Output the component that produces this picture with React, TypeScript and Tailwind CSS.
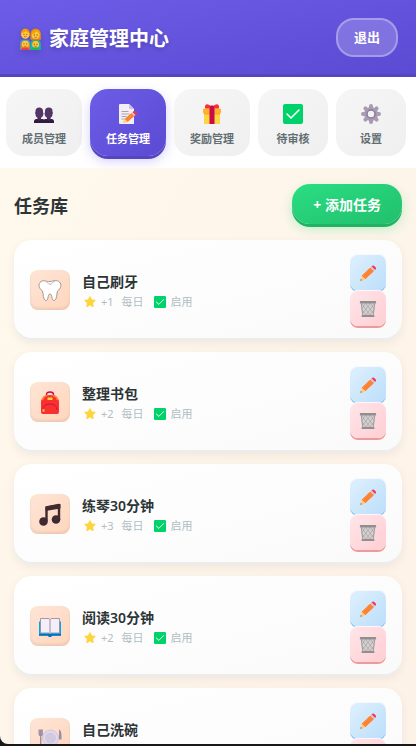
import { useState } from "react"
import type { ReactNode } from "react"
import clsx from "clsx"

type IconProps = { className?: string }

function FamilyIcon({ className }: IconProps) {
  return (
    <svg viewBox="0 0 32 32" className={className} aria-hidden="true">
      <path d="M1 32V23q0-4 3-6h9q3 2 3 6v9z" fill="#26a6ee" />
      <path d="M16 32V23q0-4 3-6h9q3 2 3 6v9z" fill="#19b7a5" />
      <path d="M2 8Q2 1 8.500 1T15 8v4H2z" fill="#d67d00" />
      <circle cx="8.500" cy="9.500" r="6" fill="#ffc83d" />
      <path d="M3 7q5 0 6-3 2 3 5 3Q13 1 8.500 1T3 7z" fill="#f59f00" />
      <path d="M16 17V8Q17 1 23.500 1T31 8v9z" fill="#f08a00" />
      <circle cx="23.500" cy="10" r="5.700" fill="#ffc83d" />
      <path d="M18 9q5-1 7-5 2 4 5 4-1-6-7-6-5 1-5 7z" fill="#f59f00" />
      <path d="M2 32v-8q0-6 6-6t7 6v8z" fill="#e88800" />
      <circle cx="8.500" cy="23.500" r="5" fill="#ffc83d" />
      <path d="M2 32q1-4 6.500-4t6.500 4z" fill="#e83f58" />
      <path d="M18 23q0-5 5.500-5t5.500 5z" fill="#c96f00" />
      <circle cx="23.500" cy="24" r="5" fill="#ffc83d" />
      <path d="M17 32q1-4 6.500-4t6.500 4z" fill="#19b85a" />
      <g fill="#5b3b3b">
        <circle cx="6.500" cy="9" r=".8" /><circle cx="10.500" cy="9" r=".8" />
        <circle cx="21.500" cy="10" r=".8" /><circle cx="25.500" cy="10" r=".8" />
        <circle cx="6.500" cy="23" r=".8" /><circle cx="10.500" cy="23" r=".8" />
        <circle cx="21.500" cy="23.500" r=".8" /><circle cx="25.500" cy="23.500" r=".8" />
      </g>
      <path d="M6.500 12q2 2 4 0M21.500 13q2 2 4 0M6.500 26q2 2 4 0M21.500 26q2 2 4 0" fill="none" stroke="#a6551d" strokeWidth="1" />
    </svg>
  )
}

function MembersIcon({ className }: IconProps) {
  return (
    <svg viewBox="0 0 20 20" className={className} aria-hidden="true">
      <path d="M0 19v-1.500Q0 15 2.500 15h6q1.500 0 1.500 1 0-1 1.500-1h6q2.500 0 2.500 2.500V19z" fill="#321b41" />
      <path d="M3.500 12h3.500v4q-1.800 1-3.500 0zM13 12h3.500v4q-1.800 1-3.500 0z" fill="#49285b" />
      <path d="M1.500 7Q1.500 3.500 5.200 3.500T9 7v1.500q.8 0 .4 1.500Q9 14 5.200 14T1.500 10Q.3 9 1.500 8zM11 7q0-3.500 3.800-3.500T18.500 7v1q1.200 1 0 2 0 4-3.700 4t-4.200-4Q10.200 8.500 11 8.500z" fill="#533566" />
    </svg>
  )
}

function MemoIcon({ className }: IconProps) {
  return (
    <svg viewBox="0 0 20 20" className={className} aria-hidden="true">
      <path d="M2 0h9l5 5v15H2Q1 20 1 19V1q0-1 1-1z" fill="#f3eef8" />
      <path d="M11 0l5 5h-4q-1 0-1-1z" fill="#cdc4d6" />
      <path d="M3.500 7.500h7M3.500 10h8M3.500 12.500h5M3.500 15h3" stroke="#9b9ba8" strokeWidth=".9" />
      <path d="M13.500 9l3 3-7 6-3-3z" fill="#ff822d" />
      <path d="M6.500 15l3 3L5.500 19q-.6 0-.5-.6z" fill="#ffce7c" />
      <path d="M13.500 9l1.200-1 3 3-1.200 1z" fill="#cdc4d6" />
      <path d="M15 8q1.500-1.200 3 .2t0 2.800z" fill="#f92f60" stroke="#f92f60" strokeWidth="1" />
    </svg>
  )
}

function GiftIcon({ className }: IconProps) {
  return (
    <svg viewBox="0 0 20 20" className={className} aria-hidden="true">
      <rect x="2" y="7" width="16" height="13" rx="1" fill="#fcd53f" />
      <path d="M2 9h16v1.500H2z" fill="#f5a623" />
      <rect x="1" y="4.500" width="18" height="5" rx="1" fill="#ffb02e" />
      <rect x="7.500" y="4" width="5" height="16" fill="#ca0b4a" />
      <path d="M9.500 3.500Q7-.5 4.200.5 2 2 3.500 4.500h6zM10.500 3.500Q13-.5 15.800.5 18 2 16.500 4.500h-6z" fill="#f8312f" />
      <rect x="8" y="1.500" width="4" height="3.500" rx="1" fill="#ca0b4a" />
    </svg>
  )
}

function CheckIcon({ className }: IconProps) {
  return (
    <svg viewBox="0 0 20 20" className={className} aria-hidden="true">
      <rect width="20" height="20" rx="2" fill="#00d26a" />
      <path d="M4 10l4 4 8-8" fill="none" stroke="#fff" strokeWidth="1.600" strokeLinecap="round" strokeLinejoin="round" />
    </svg>
  )
}

function GearIcon({ className }: IconProps) {
  return (
    <svg viewBox="0 0 20 20" className={className} aria-hidden="true">
      <g stroke="#a99bb4" strokeWidth="4" strokeLinecap="round">
        <path d="M10 2v16M2 10h16M4.400 4.400l11.200 11.200M15.600 4.400L4.400 15.600" />
      </g>
      <circle cx="10" cy="10" r="7" fill="#a99bb4" />
      <circle cx="10" cy="10" r="4" fill="#f3f3f3" stroke="#8a7b97" strokeWidth="1.500" />
    </svg>
  )
}

function StarIcon({ className }: IconProps) {
  return (
    <svg viewBox="0 0 20 20" className={className} aria-hidden="true">
      <path d="M10 1.500l2.500 5 5.800.9-4.200 4.100 1 5.800-5.100-2.700-5.200 2.700 1-5.800-4.100-4.100 5.700-.9z" fill="#fcd53f" stroke="#fcd53f" strokeWidth="2" strokeLinejoin="round" />
    </svg>
  )
}

function ToothIcon({ className }: IconProps) {
  return (
    <svg viewBox="0 0 26 24" className={className} aria-hidden="true">
      <path d="M4 2.500C7 .5 9 3 13 2.500S19.500.5 22.500 3c2.500 2.500 1.500 6.500-2 9-1 4-.5 8-3 9.500-3 1-2-6.500-4.500-6.500s-1.500 7.500-4.500 6.500C6 20 6.500 16 5.500 12 1.500 9 .8 5 4 2.500z" fill="#fff" stroke="#8c8782" strokeWidth=".8" />
      <path d="M9 2.500Q11 5 14 5.500M18 2q-3 1-4.500 4" fill="none" stroke="#aaa5a0" strokeWidth=".7" />
    </svg>
  )
}

function BackpackIcon({ className }: IconProps) {
  return (
    <svg viewBox="0 0 26 24" className={className} aria-hidden="true">
      <path d="M9.500 6V3.500Q9.500 1 13 1t3.500 2.500V6" fill="none" stroke="#ca0b4a" strokeWidth="1.400" />
      <path d="M4 12q0-8 9-8t9 8v9q0 2-2 2H6q-2 0-2-2z" fill="#f8312f" />
      <path d="M5.500 9q1-4 4.500-4.500M20.500 9q-1-4-4.500-4.500" stroke="#ff822d" strokeWidth="1.600" fill="none" />
      <path d="M6 22v-3q0-6 7-6t7 6" fill="none" stroke="#ca0b4a" strokeWidth=".9" />
      <rect x="10.500" y="6.500" width="5" height="2.500" rx=".5" fill="#fcd53f" />
      <rect x="5.500" y="18" width="2" height="3" fill="#ffb02e" />
    </svg>
  )
}

function MusicIcon({ className }: IconProps) {
  return (
    <svg viewBox="0 0 26 24" className={className} aria-hidden="true">
      <path d="M9.500 18V4.500L22 2v15" fill="none" stroke="#402a32" strokeWidth="2.400" strokeLinejoin="round" />
      <path d="M8.500 3.500l15-2.500v4.500l-15 2.500z" fill="#402a32" />
      <circle cx="6.500" cy="18.500" r="4.300" fill="#402a32" />
      <circle cx="19" cy="16.500" r="4.300" fill="#402a32" />
    </svg>
  )
}

function BookIcon({ className }: IconProps) {
  return (
    <svg viewBox="0 0 26 24" className={className} aria-hidden="true">
      <path d="M2 6.500h22v14H15l-1 1.500h-2l-1-1.500H2z" fill="#00a6ed" />
      <path d="M2 19h22v1.800H15L14 22h-2l-1-1.200H2z" fill="#0074ba" />
      <path d="M3.500 3.500H12l1 1 1-1h8.500V18H14l-1 1-1-1H3.500z" fill="#f3eef8" stroke="#998ea4" strokeWidth=".9" />
      <path d="M13 4v14.500" stroke="#998ea4" />
    </svg>
  )
}

function PlateIcon({ className }: IconProps) {
  return (
    <svg viewBox="0 0 26 24" className={className} aria-hidden="true">
      <circle cx="13.500" cy="11" r="8" fill="#e1d8ec" stroke="#cdc4d6" />
      <circle cx="13.500" cy="11" r="5.500" fill="#d3c9de" />
      <path d="M2.200 2.500V7q0 1.500 1.500 1.500T5.200 7V2.500M3.700 2.500v19" fill="none" stroke="#998ea4" strokeWidth="1.400" />
      <path d="M22 21.500v-19q2.500 1 2.500 6v4H22z" fill="#998ea4" />
    </svg>
  )
}

function PencilIcon({ className }: IconProps) {
  return (
    <svg viewBox="0 0 20 20" className={className} aria-hidden="true">
      <path d="M12.500 4l4 4L7 17l-4-4z" fill="#ff822d" />
      <path d="M3 13l4 4-4.500 1.800q-1 .2-.8-.8z" fill="#ffce7c" />
      <path d="M2 16.500L3.500 18l-1.300.7q-.8.200-.6-.7z" fill="#7d7d80" />
      <path d="M12.500 4l1.500-1.400 4 4L16.500 8z" fill="#d3c3d4" />
      <path d="M14 2.600q1.500-1.800 3.300-.2l1 1q1.500 1.600-.3 3.200z" fill="#f92f60" />
    </svg>
  )
}

function TrashIcon({ className }: IconProps) {
  return (
    <svg viewBox="0 0 20 20" className={className} aria-hidden="true">
      <path d="M2 3h16l-1.800 15H3.800z" fill="#d6d1d3" />
      <path d="M3 4l10 14M7 3l9 12M12 3l5 7M3.500 11l5 7M17 4L7 18M13 3L4 15M8 3L3 10M16.500 11l-5 7" stroke="#a3a0a1" strokeWidth=".8" />
      <path d="M2.500 4l1.800 14M17.500 4l-1.800 14" stroke="#9b9999" />
      <rect x="1" y="1" width="18" height="2.800" rx=".5" fill="#8f8f8f" />
      <rect x="3" y="16.800" width="14" height="2.200" rx=".5" fill="#8f8f8f" />
    </svg>
  )
}

const tabs: { id: string; label: string; icon: ReactNode }[] = [
  { id: "members", label: "成员管理", icon: <MembersIcon className="size-5" /> },
  { id: "tasks", label: "任务管理", icon: <MemoIcon className="size-5" /> },
  { id: "rewards", label: "奖励管理", icon: <GiftIcon className="size-5" /> },
  { id: "review", label: "待审核", icon: <CheckIcon className="size-5" /> },
  { id: "settings", label: "设置", icon: <GearIcon className="size-5" /> },
]

const tasks: { name: string; points: number; icon: ReactNode }[] = [
  { name: "自己刷牙", points: 1, icon: <ToothIcon className="h-6 w-[26px]" /> },
  { name: "整理书包", points: 2, icon: <BackpackIcon className="h-6 w-[26px]" /> },
  { name: "练琴30分钟", points: 3, icon: <MusicIcon className="h-6 w-[26px]" /> },
  { name: "阅读30分钟", points: 2, icon: <BookIcon className="h-6 w-[26px]" /> },
  { name: "自己洗碗", points: 2, icon: <PlateIcon className="h-6 w-[26px]" /> },
]

export default function App() {
  const [activeTab, setActiveTab] = useState("tasks")

  return (
    <div className="h-screen bg-[#181818] pb-[2px] font-['Noto_Sans','Noto_Sans_CJK_SC',sans-serif] text-[#2d3436]">
      <div className="h-full overflow-y-auto rounded-bl-lg bg-linear-to-br from-[#fff9ed] to-[#fdf2e7] [scrollbar-width:none]">
        {/* Header */}
        <header className="flex items-center justify-between bg-linear-to-br from-[#6c5ce7] to-[#5b4bd3] px-[18px] pt-[18px] pb-5 shadow-[inset_0_-3px_0_#5546bf]">
          <h1 className="flex items-center gap-1.5 pt-0.5 text-xl font-bold text-white [text-shadow:0_2px_4px_rgba(0,0,0,0.2)]">
            <FamilyIcon className="h-[22px] w-[25px] drop-shadow-md" />
            家庭管理中心
          </h1>
          <button className="h-[39px] rounded-[18px] border-2 border-white/30 bg-white/20 px-4 text-[13px] font-bold text-white">
            退出
          </button>
        </header>

        {/* Tabs */}
        <nav className="flex gap-2 overflow-x-auto bg-white px-1.5 py-3 [scrollbar-width:none]">
          {tabs.map((tab) => (
            <button
              key={tab.id}
              onClick={() => setActiveTab(tab.id)}
              className={clsx(
                "flex h-[67px] min-w-[70px] shrink-0 flex-col items-center justify-center gap-[7px] rounded-[18px] px-4 pt-[5px] text-[11px] leading-4 font-semibold",
                tab.id === activeTab
                  ? "bg-linear-to-br from-[#6c5ce7] to-[#5b4bd3] text-white shadow-[0_3px_0_#5546bf,0_5px_12px_rgba(108,92,231,0.3)]"
                  : "bg-linear-to-br from-[#f6f6f6] to-[#efefef] text-[#636e72]"
              )}
            >
              {tab.icon}
              {tab.label}
            </button>
          ))}
        </nav>

        {/* Task list */}
        <main className="px-3.5 py-4">
          <div className="mb-4 flex items-center justify-between">
            <h2 className="pt-1 text-lg font-semibold">任务库</h2>
            <button className="h-10 rounded-[18px] bg-linear-to-br from-[#2ade83] to-[#22bf6c] px-[21px] pt-0.5 text-sm font-bold text-white shadow-[0_3px_0_#20b462,0_5px_12px_rgba(38,222,129,0.3)]">
              + 添加任务
            </button>
          </div>

          <ul className="flex flex-col gap-3">
            {tasks.map((task) => (
              <li
                key={task.name}
                className="flex items-center gap-3 rounded-[18px] bg-linear-to-br from-white to-[#fafafa] px-4 py-3.5 shadow-[inset_0_-2px_0_#ececec,0_3px_10px_rgba(0,0,0,0.06)]"
              >
                <div className="flex size-10 shrink-0 items-center justify-center rounded-lg bg-linear-to-br from-[#ffe5d6] to-[#ffd5bd] pt-0.5 shadow-[inset_0_-2px_3px_rgba(0,0,0,0.08)]">
                  {task.icon}
                </div>
                <div className="min-w-0 flex-1 pt-1">
                  <h3 className="text-sm leading-5 font-semibold">{task.name}</h3>
                  <div className="flex items-center gap-2 text-[11px] leading-5 text-[#b2bec3]">
                    <span className="flex items-center gap-[5px]">
                      <StarIcon className="ml-0.5 size-3" />+{task.points}
                    </span>
                    <span>每日</span>
                    <span className="flex items-center gap-[5px]">
                      <CheckIcon className="ml-0.5 size-3" />
                      启用
                    </span>
                  </div>
                </div>
                <div className="flex flex-col">
                  <button
                    aria-label={`编辑${task.name}`}
                    className="flex size-9 items-center justify-center rounded-lg bg-linear-to-br from-[#e0f0fd] to-[#bbdefb] pt-0.5 shadow-[0_2px_0_#90caf9,inset_0_1px_0_rgba(255,255,255,0.7)]"
                  >
                    <PencilIcon className="size-[18px]" />
                  </button>
                  <button
                    aria-label={`删除${task.name}`}
                    className="flex size-9 items-center justify-center rounded-lg bg-linear-to-br from-[#ffe6ea] to-[#ffcdd2] pt-0.5 shadow-[0_2px_0_#ef9a9a,inset_0_1px_0_rgba(255,255,255,0.7)]"
                  >
                    <TrashIcon className="size-[18px]" />
                  </button>
                </div>
              </li>
            ))}
          </ul>
        </main>
      </div>
    </div>
  )
}
